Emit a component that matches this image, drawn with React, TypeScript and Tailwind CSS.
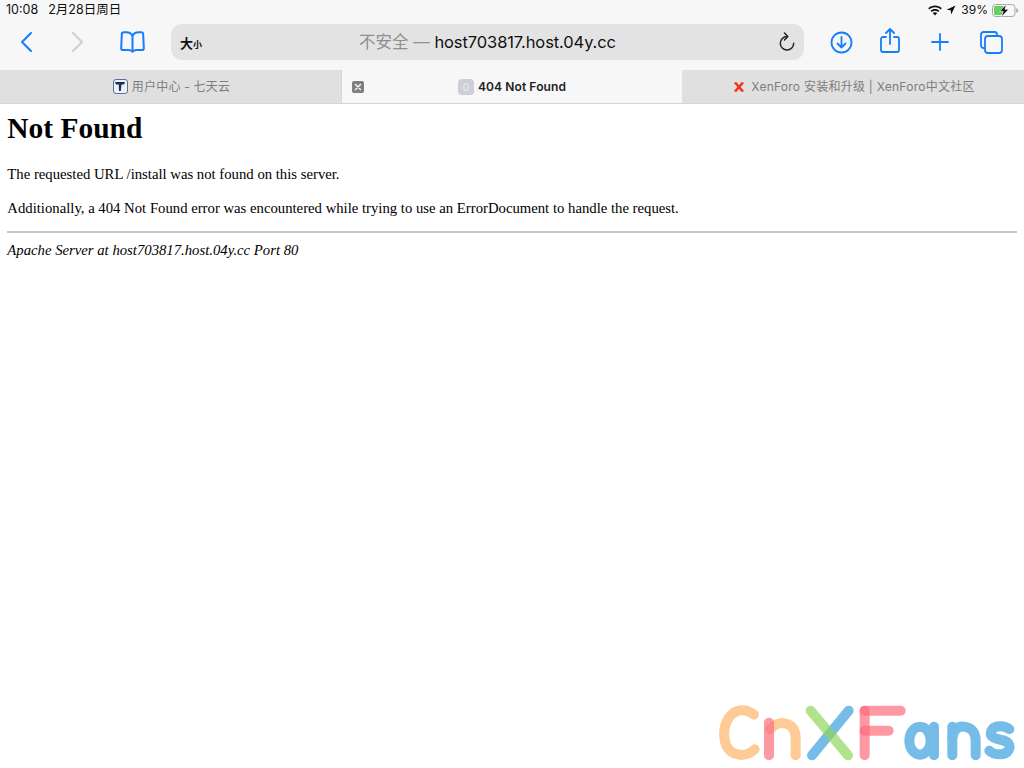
const ui = "font-['Inter','Noto_Sans_CJK_SC',sans-serif]";

function Wifi() {
  return (
    <svg width="14" height="11" viewBox="0 0 14 11" fill="#111">
      <path d="M7 0.500c2.600 0 5 1 6.800 2.700l-1.200 1.300C11.100 3.100 9.100 2.300 7 2.300S2.900 3.100 1.400 4.500L0.200 3.200C2 1.500 4.400 0.500 7 0.500z" />
      <path d="M7 3.900c1.700 0 3.200 0.600 4.400 1.700l-1.200 1.300C9.300 6.100 8.200 5.700 7 5.700s-2.300 0.400-3.200 1.200L2.600 5.600C3.800 4.500 5.300 3.900 7 3.900z" />
      <path d="M7 7.200c0.900 0 1.700 0.300 2.300 0.900L7 10.500 4.700 8.100C5.300 7.500 6.100 7.200 7 7.200z" />
    </svg>
  );
}

function Battery() {
  return (
    <svg width="27" height="13" viewBox="0 0 27 13">
      <rect x="0.500" y="0.500" width="22.500" height="12" rx="3" fill="none" stroke="#a8a8a8" />
      <rect x="2" y="2" width="10" height="9" rx="1.200" fill="#5fd35b" />
      <path d="M24.200 4.300c1.300 0.300 1.900 1.100 1.900 2.200s-0.600 1.900-1.900 2.200z" fill="#a8a8a8" />
      <path d="M14.500 0.200L7.500 7.300h3.700l-1.700 5.500 7.300-7.500h-3.900z" fill="#111" stroke="#f7f7f7" strokeWidth="0.700" />
    </svg>
  );
}

function Toolbar() {
  return (
    <div className="flex h-[50px] items-start">
      <div className="flex h-[36px] w-[171px] mt-[4px] items-center">
        <svg className="ml-[20px]" width="13" height="22" viewBox="0 0 13 22" fill="none" stroke="#157efb" strokeWidth="2" strokeLinecap="round" strokeLinejoin="round">
          <path d="M11 2L2 11l9 9" />
        </svg>
        <svg className="ml-[38px]" width="13" height="22" viewBox="0 0 13 22" fill="none" stroke="#cfcfcf" strokeWidth="2" strokeLinecap="round" strokeLinejoin="round">
          <path d="M2 2l9 9-9 9" />
        </svg>
        <svg className="ml-[36px]" width="25" height="22" viewBox="0 0 25 22" fill="none" stroke="#157efb" strokeWidth="2" strokeLinecap="round" strokeLinejoin="round">
          <path d="M12.500 5C11.500 2.500 9 1.200 6 1.200H4C2.500 1.200 1.800 2 1.800 3.500L1.200 17c-0.100 1.300 0.500 2 1.800 2H8c2 0 3.500 0.400 4.500 1.600 1-1.200 2.500-1.600 4.500-1.600h5c1.300 0 1.900-0.700 1.800-2L23.200 3.500C23.200 2 22.500 1.200 21 1.200h-2c-3 0-5.500 1.300-6.500 3.800z" />
          <path d="M12.500 5v15.500" />
        </svg>
      </div>
      <div className="flex h-[36px] w-[633px] mt-[4px] items-center rounded-[11px] bg-[#e3e3e3]">
        <span className="ml-[9px] flex w-[40px] items-baseline font-bold text-[#111] font-['Noto_Sans_CJK_SC',sans-serif]">
          <span className="text-[13px] leading-none">大</span>
          <span className="text-[9px] leading-none">小</span>
        </span>
        <div className="flex-1 pl-[12px] text-center text-[16.5px] leading-none font-['Inter','Noto_Sans_CJK_SC',sans-serif]">
          <span className="text-[#8e8e8e]">不安全 — </span>
          <span className="tracking-[-0.1px] text-[#111]">host703817.host.04y.cc</span>
        </div>
        <svg className="mr-[9px] ml-[36px]" width="16" height="20" viewBox="0 0 16 20" fill="none" stroke="#222" strokeWidth="1.500" strokeLinecap="round" strokeLinejoin="round">
          <path d="M8 4.500a6.700 6.700 0 1 0 6.700 6.700" />
          <path d="M5.500 1l3.300 3.400L5.500 8" />
        </svg>
      </div>
      <div className="flex h-[36px] flex-1 mt-[4px] items-center">
        <svg className="ml-[26px]" width="23" height="23" viewBox="0 0 23 23" fill="none" stroke="#157efb" strokeWidth="1.800" strokeLinecap="round" strokeLinejoin="round">
          <circle cx="11.500" cy="11.500" r="10" />
          <path d="M11.500 6v10.500M7.500 12.500l4 4 4-4" />
        </svg>
        <svg className="ml-[27px] -mt-[3px]" width="20" height="25" viewBox="0 0 20 25" fill="none" stroke="#157efb" strokeWidth="1.800" strokeLinecap="round" strokeLinejoin="round">
          <path d="M6 9H3c-1.200 0-2 0.800-2 2v11c0 1.200 0.800 2 2 2h14c1.200 0 2-0.800 2-2V11c0-1.200-0.800-2-2-2h-3" />
          <path d="M10 16V1.500M6 5l4-4 4 4" />
        </svg>
        <svg className="ml-[31px]" width="18" height="18" viewBox="0 0 18 18" fill="none" stroke="#157efb" strokeWidth="1.800" strokeLinecap="round">
          <path d="M9 1v16M1 9h16" />
        </svg>
        <svg className="ml-[31px]" width="23" height="23" viewBox="0 0 23 23" fill="none" stroke="#157efb" strokeWidth="1.800" strokeLinejoin="round">
          <path d="M5 17H3.500C2 17 1 16 1 14.500v-11C1 2 2 1 3.500 1h11C16 1 17 2 17 3.500V5" />
          <rect x="5" y="5" width="17" height="17" rx="3" />
        </svg>
      </div>
    </div>
  );
}

function Tabs() {
  return (
    <div className="flex h-[34px] border-b border-[#d6d6d6] bg-[#e0e0e0] text-[12px] text-[#7d7d7d]">
      <div className="flex w-[341px] items-center justify-center gap-[4px] pl-[2px]">
        <span className="flex h-[15px] w-[15px] items-center justify-center rounded-[3px] border border-[#5b7096] bg-[#eef1f6]">
          <svg width="10" height="9" viewBox="0 0 10 9" fill="#15325f">
            <path d="M0 0h10L9 2.500H6.500L5.800 9H4L3.800 2.500H1z" />
          </svg>
        </span>
        <span className="tracking-[0.2px]">用户中心 - 七天云</span>
      </div>
      <div className="relative flex w-[341px] items-center justify-center gap-[4px] border-l border-[#d6d6d6] bg-[#f7f7f7] font-semibold tracking-[0.1px] text-[#222]">
        <span className="absolute left-[10px] flex h-[12px] w-[12px] items-center justify-center rounded-[2px] bg-[#7f7f7f]">
          <svg width="8" height="8" viewBox="0 0 8 8" stroke="#fff" strokeWidth="1.300" strokeLinecap="round">
            <path d="M1.500 1.500l5 5M6.500 1.500l-5 5" />
          </svg>
        </span>
        <span className="flex h-[16px] w-[16px] items-center justify-center rounded-[4px] bg-[#cdcfd8] text-[10px] font-normal leading-none text-[#eeeef2]">0</span>
        <span>404 Not Found</span>
      </div>
      <div className="flex flex-1 items-center justify-center gap-[7px] pl-[3px]">
        <svg width="10" height="10" viewBox="0 0 10 10" stroke="#f4351c" strokeWidth="2.600">
          <path d="M1 0.500l8 9M9 0.500l-8 9" />
        </svg>
        <span className="tracking-[0.25px]">XenForo 安装和升级 | XenForo中文社区</span>
      </div>
    </div>
  );
}

function Watermark() {
  const orange = "#fdb56a";
  const pink = "#fe6c7c";
  const green = "#8ed75b";
  const blue = "#75bde8";
  return (
    <svg className="absolute right-0 bottom-0" width="320" height="78" viewBox="0 0 960 234" fill="none" strokeWidth="30" strokeLinecap="round" strokeLinejoin="round">
      <g strokeOpacity="0.7">
        <path d="M150 74C126 54 94 56 74 84c-20 30-18 78 6 100 24 16 50 14 72-6" stroke={orange} />
        <path d="M198 118c14-14 28-22 44-18 24 4 33 22 33 44v52" stroke={orange} />
        <path d="M195 98v98" stroke={pink} />
      </g>
      <path d="M324 196L434 62" stroke={blue} />
      <path d="M320 62l112 134" stroke={green} strokeOpacity="0.7" />
      <g strokeOpacity="0.7">
        <path d="M482 62v134" stroke={pink} />
        <path d="M482 62h108" stroke={pink} />
        <path d="M482 122h72" stroke={pink} />
      </g>
      <ellipse cx="648" cy="152" rx="32" ry="42" stroke={blue} />
      <path d="M690 110v86M745 110v86" stroke={blue} />
      <path d="M745 142c4-24 18-34 36-32 24 2 34 20 34 42v44" stroke={blue} />
      <path d="M916 118c-12-12-46-14-54 4-8 18 12 24 30 28 20 4 30 14 22 30-10 18-44 16-58 2" stroke={blue} />
    </svg>
  );
}

export default function App() {
  return (
    <div className="relative h-[768px] w-[1024px] overflow-hidden bg-white">
      <header className={`bg-[#f7f7f7] ${ui}`}>
        <div className="flex h-[20px] items-center justify-between pl-[6px] pr-[5px] text-[#111]">
          <div className="flex gap-[10px] text-[12.5px]">
            <span>10:08</span>
            <span>2月28日周日</span>
          </div>
          <div className="flex items-center gap-[4px] text-[12px]">
            <Wifi />
            <svg width="10" height="10" viewBox="0 0 10 10" fill="#111">
              <path d="M9.500 0.500L0.500 4.800l4.200 0.500 0.500 4.200z" />
            </svg>
            <span className="ml-[1px]">39%</span>
            <Battery />
          </div>
        </div>
        <Toolbar />
        <Tabs />
      </header>
      <main className="px-[7.35px] pt-[7px] text-[14.72px] leading-[17px] text-black font-['Liberation_Serif',serif]">
        <h1 className="text-[29.44px] leading-[34px] font-bold">Not Found</h1>
        <p className="mt-[21px]">The requested URL /install was not found on this server.</p>
        <p className="mt-[17px]">Additionally, a 404 Not Found error was encountered while trying to use an ErrorDocument to handle the request.</p>
        <hr className="mt-[14px] h-[2px] border-0 bg-[#c8c8c8]" />
        <address className="mt-[9px] italic">Apache Server at host703817.host.04y.cc Port 80</address>
      </main>
      <Watermark />
    </div>
  );
}
